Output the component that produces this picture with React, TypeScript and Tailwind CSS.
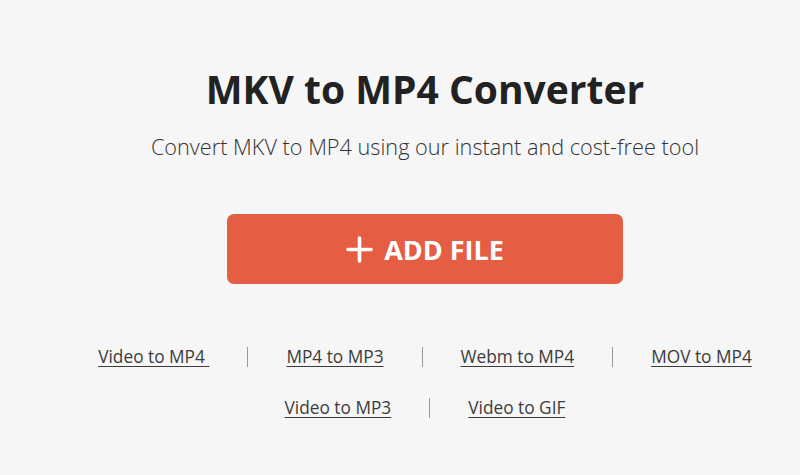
import React from "react";

const rowOne = ["Video to MP4\u00a0", "MP4 to MP3", "Webm to MP4", "MOV to MP4"];
const rowTwo = ["Video to MP3", "Video to GIF"];

function LinkRow({ items }: { items: string[] }) {
  return (
    <div className="flex items-center justify-center">
      {items.map((label, i) => (
        <React.Fragment key={label}>
          {i > 0 && <span className="mx-[38px] h-[20px] w-px bg-[#9a9a9a]" />}
          <a href="#" className="text-[17.3px] leading-[24px] text-[#3c3c3c] underline underline-offset-[3px]">
            {label}
          </a>
        </React.Fragment>
      ))}
    </div>
  );
}

export default function App() {
  return (
    <div
      className="min-h-[475px] bg-[#f6f6f6] pl-[50px]"
      style={{ fontFamily: '"Open Sans", "Liberation Sans", sans-serif' }}
    >
      <div className="flex flex-col items-center pt-[61px]">
        <h1 className="text-[39px] font-bold leading-[56px] text-[#222222]">MKV to MP4 Converter</h1>
        <p className="mt-[15px] text-[21.7px] font-light leading-[30px] text-[#333333]">
          Convert MKV to MP4 using our instant and cost-free tool
        </p>
        <button className="mt-[52px] flex h-[70px] w-[396px] items-center justify-center gap-[11px] rounded-[7px] bg-[#e55d43] text-white">
          <svg width="27" height="27" viewBox="0 0 27 27" fill="none" stroke="white" strokeWidth="3.6" strokeLinecap="round">
            <path d="M13.5 2v23M2 13.5h23" />
          </svg>
          <span className="text-[27px] font-bold leading-none">ADD FILE</span>
        </button>
        <div className="mt-[61px] flex flex-col gap-[27px]">
          <LinkRow items={rowOne} />
          <LinkRow items={rowTwo} />
        </div>
      </div>
    </div>
  );
}
